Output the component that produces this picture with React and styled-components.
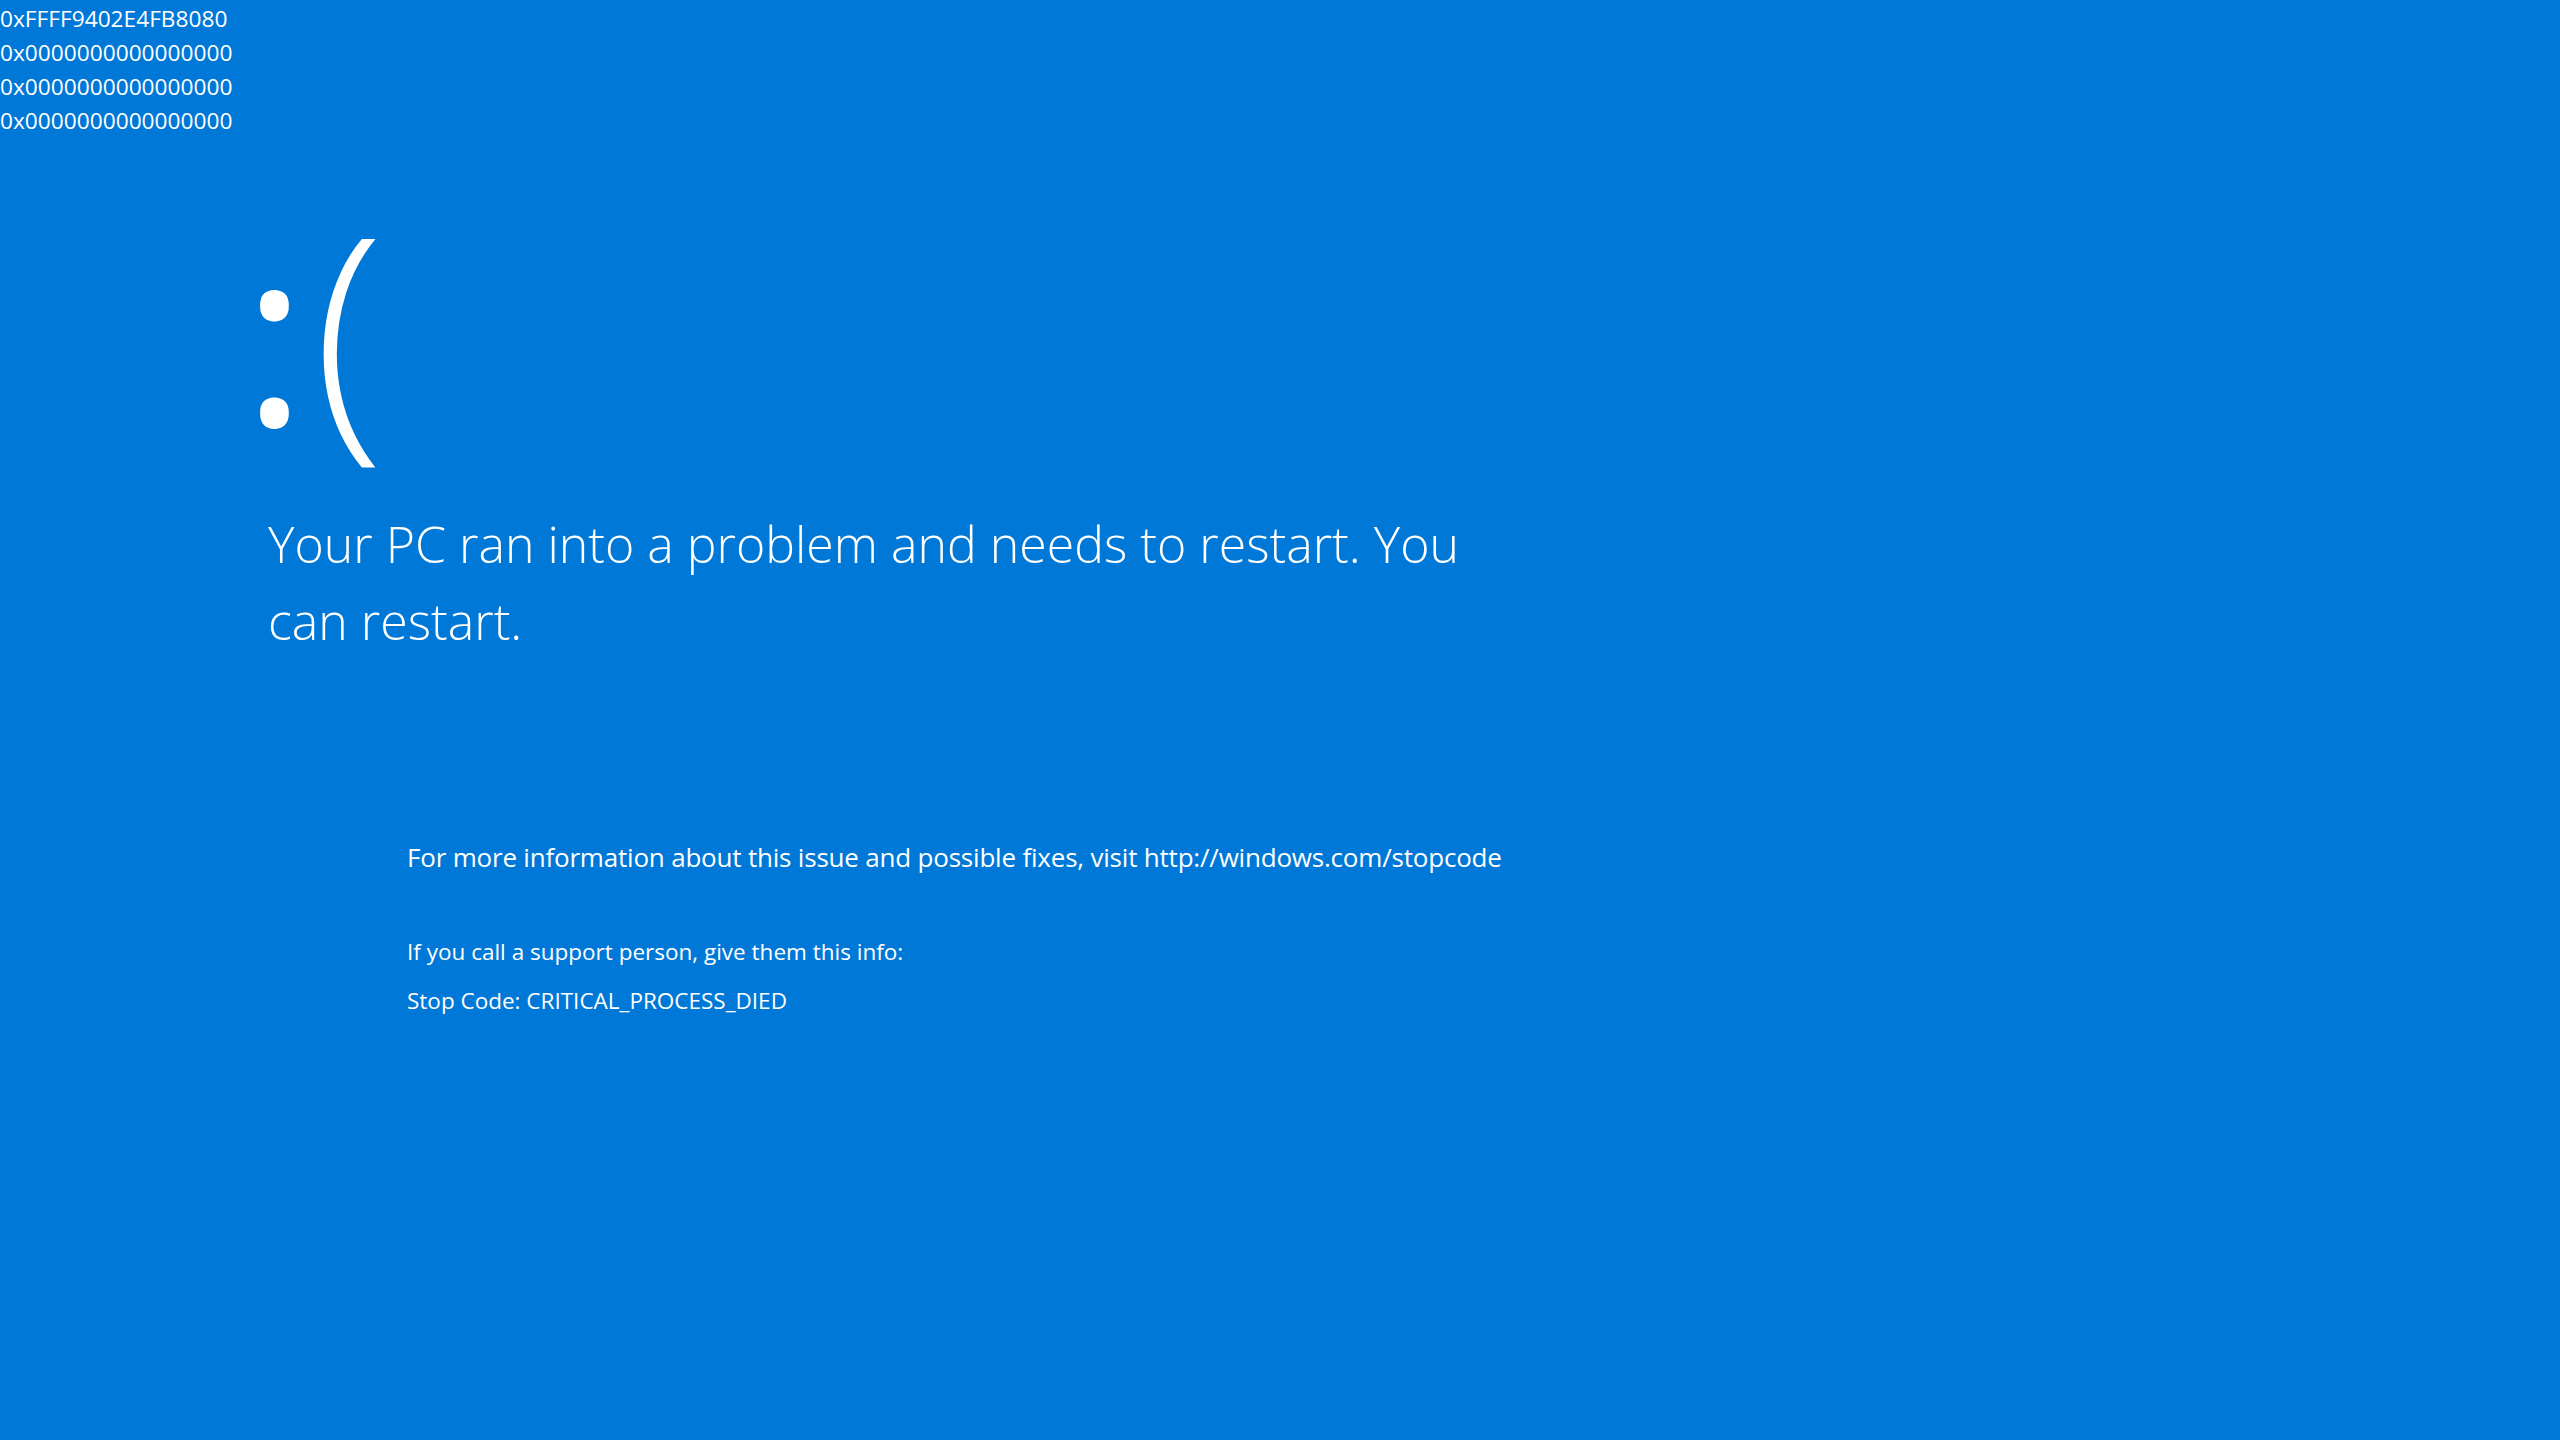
import React from 'react'
import styled, { createGlobalStyle } from 'styled-components'

const GlobalStyle = createGlobalStyle`
  html, body {
    margin: 0;
    padding: 0;
    background: #0078d7;
  }
`

const Screen = styled.main`
  min-height: 100vh;
  background: #0078d7;
  color: #ffffff;
  font-family: "Open Sans", "Noto Sans", sans-serif;
  display: flex;
  flex-direction: column;
  overflow: hidden;
`

const HexDump = styled.div`
  display: flex;
  flex-direction: column;
  padding-top: 2px;
  font-size: 22.7px;
  line-height: 34px;
  font-weight: 400;
`

const Face = styled.div`
  margin: 56px 0 0 242px;
  display: flex;
  align-items: baseline;
  line-height: 1;
  height: 290px;
`

const Eyes = styled.span`
  font-size: 247px;
  font-weight: 400;
`

const Mouth = styled.span`
  font-size: 262px;
  font-weight: 300;
  margin-left: 6px;
`

const Headline = styled.h1`
  margin: 22px 0 0 268px;
  max-width: 1230px;
  font-size: 50px;
  font-weight: 300;
  line-height: 77px;
`

const Details = styled.section`
  margin: 177px 0 0 407px;
  display: flex;
  flex-direction: column;
`

const InfoLine = styled.p`
  margin: 0;
  font-size: ${p => (p.$large ? '26px' : '22.5px')};
  line-height: ${p => (p.$large ? '40px' : '34px')};
  margin-bottom: ${p => p.$gap || 0}px;
  letter-spacing: ${p => (p.$large ? '-0.2px' : '0')};
`

const hexLines = [
  '0xFFFF9402E4FB8080',
  '0x0000000000000000',
  '0x0000000000000000',
  '0x0000000000000000',
]

export default function App() {
  return (
    <Screen>
      <GlobalStyle />
      <HexDump>
        {hexLines.map((l, i) => <span key={i}>{l}</span>)}
      </HexDump>
      <Face>
        <Eyes>:</Eyes>
        <Mouth>(</Mouth>
      </Face>
      <Headline>Your PC ran into a problem and needs to restart. You can restart.</Headline>
      <Details>
        <InfoLine $large $gap={58}>
          For more information about this issue and possible fixes, visit http://windows.com/stopcode
        </InfoLine>
        <InfoLine $gap={15}>If you call a support person, give them this info:</InfoLine>
        <InfoLine>Stop Code: CRITICAL_PROCESS_DIED</InfoLine>
      </Details>
    </Screen>
  )
}
